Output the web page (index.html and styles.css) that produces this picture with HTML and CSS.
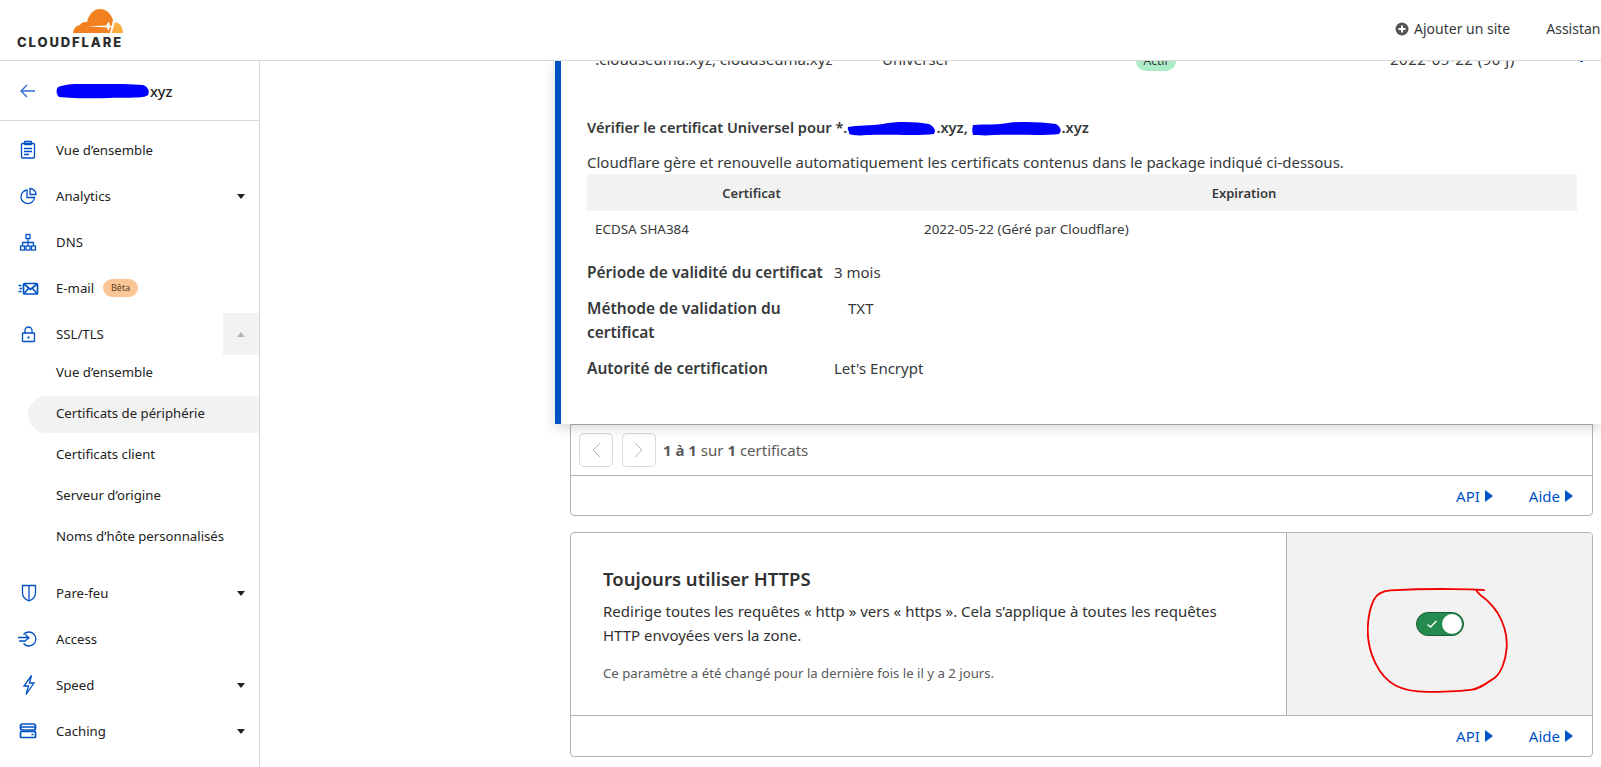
FILE: index.html
```html
<!DOCTYPE html>
<html lang="fr">
<head>
<meta charset="utf-8">
<title>Cloudflare - Certificats de périphérie</title>
<link rel="stylesheet" href="styles.css">
</head>
<body>
<header class="topbar">
  <div class="logo">
    <svg class="logo-cloud" width="50" height="24" viewBox="0 0 50 24">
      <path class="cloud-main" d="M0 24C.4 19.500 3.500 16.500 7 16C8.500 13.500 11 12.500 14 13.300C15.500 5.500 20.500 0 27 0C33 0 38 4.500 40 11L37 24Z"/>
      <path class="cloud-spark" d="M15 17.200L33 16.500L35.800 12.500L37 16.600L41 17.500L37 18.300L35.200 22L34 18.400Z"/>
      <path class="cloud-light" d="M38.500 24L40.500 18.500C41 16.500 41.300 15 41.500 13.500C46.500 13 50 18 50 24Z"/>
    </svg>
    <span class="logo-text">CLOUDFLARE</span>
  </div>
  <nav class="topnav">
    <a class="topnav-link">
      <svg width="14" height="14" viewBox="0 0 14 14"><circle cx="7" cy="7" r="6.500" class="plus-bg"/><path d="M7 3.500v7M3.500 7h7" class="plus-mark"/></svg>
      Ajouter un site
    </a>
    <a class="topnav-link topnav-cut">Assistance</a>
  </nav>
</header>

<div class="layout">
  <aside class="sidebar">
    <div class="domain">
      <svg class="back" width="18" height="14" viewBox="0 0 18 14"><path d="M16 7H2M8 1L2 7l6 6"/></svg>
      <span class="domain-name">
        <svg class="scribble" width="94" height="17" viewBox="0 0 95 17"><path d="M2 5C12 1 24 2 40 2C58 2 78 2 88 3C93 5 95 9 93 13C88 17 72 15 54 16C36 17 14 16 3 15C0 12 0 8 2 5Z"/></svg><span>xyz</span>
      </span>
    </div>
    <ul class="nav">
      <li class="nav-item">
        <svg class="ico" viewBox="0 0 24 24"><rect x="5.500" y="5.500" width="13" height="14.500" rx="1"/><rect x="8.500" y="3.500" width="7" height="3" rx=".5"/><path d="M8 10.500h8M8 13.500h8M8 16.500h5"/></svg>
        <span>Vue d’ensemble</span>
      </li>
      <li class="nav-item">
        <svg class="ico" viewBox="0 0 24 24"><path d="M11 6A6.800 6.800 0 1 0 18.500 13.500H11Z"/><path d="M14 4.500A6 6 0 0 1 20 10.500H14Z"/></svg>
        <span>Analytics</span><i class="caret"></i>
      </li>
      <li class="nav-item">
        <svg class="ico" viewBox="0 0 24 24"><rect x="10" y="4.500" width="4" height="4"/><rect x="4.500" y="16" width="4" height="4"/><rect x="10" y="16" width="4" height="4"/><rect x="15.500" y="16" width="4" height="4"/><path d="M12 8.500V16M6.500 16v-3.500h11V16"/></svg>
        <span>DNS</span>
      </li>
      <li class="nav-item">
        <svg class="ico ico-thick" viewBox="0 0 24 24"><rect x="7.500" y="7.500" width="14" height="10.500" rx="1"/><path d="M8 8l6.500 5.500L21 8M8 17.500l4.500-5M21 17.500l-4.500-5M2.500 9.500h3M3.500 12.500h2.500M2.500 15.500h3"/></svg>
        <span>E-mail</span><span class="beta">Bêta</span>
      </li>
      <li class="nav-item nav-open">
        <svg class="ico" viewBox="0 0 24 24"><rect x="6.500" y="11" width="12" height="8.500" rx=".5"/><path d="M9 11V8.500a3.500 3.500 0 0 1 7 0V11"/><path d="M12.500 14.500v2" class="ico-key"/></svg>
        <span>SSL/TLS</span><span class="caret-box"><i class="caret-up"></i></span>
      </li>
      <li>
        <ul class="subnav">
          <li class="sub-item">Vue d’ensemble</li>
          <li class="sub-item sub-active">Certificats de périphérie</li>
          <li class="sub-item">Certificats client</li>
          <li class="sub-item">Serveur d’origine</li>
          <li class="sub-item">Noms d’hôte personnalisés</li>
        </ul>
      </li>
      <li class="nav-item">
        <svg class="ico" viewBox="0 0 24 24"><path d="M6.500 4.500h13v7.500c0 4-3 6.500-6.500 8c-3.500-1.500-6.500-4-6.500-8Z"/><path d="M13 4.500v15"/></svg>
        <span>Pare-feu</span><i class="caret"></i>
      </li>
      <li class="nav-item">
        <svg class="ico" viewBox="0 0 24 24"><path d="M7.500 7.500A7 7 0 1 1 7.500 16.500"/><path d="M2 10.500h11M9.500 7.500l3.500 3.500-3.500 2.500M3 14h7"/></svg>
        <span>Access</span>
      </li>
      <li class="nav-item">
        <svg class="ico" viewBox="0 0 24 24"><path d="M15.500 2.500L8 13h4.500L10 21.500L18 10h-4.500Z"/></svg>
        <span>Speed</span><i class="caret"></i>
      </li>
      <li class="nav-item">
        <svg class="ico ico-thick" viewBox="0 0 24 24"><rect x="4.500" y="5" width="15" height="6" rx="2"/><rect x="4.500" y="12.500" width="15" height="6" rx="1"/><path d="M5 8h14M15.500 15.500h2"/></svg>
        <span>Caching</span><i class="caret"></i>
      </li>
    </ul>
  </aside>

  <main class="main">
    <section class="detail">
      <div class="cert-row">
        <span>*.cloudseuma.xyz, cloudseuma.xyz</span>
        <span>Universel</span>
        <span class="pill-cell"><span class="pill">Actif</span></span>
        <span class="cert-date">2022-05-22 (90 j)</span>
        <i class="row-chevron"></i>
      </div>
      <h3 class="detail-title">Vérifier le certificat Universel pour *.<svg class="scribble mid" width="89" height="15" viewBox="0 0 89 15"><path d="M1 6C10 4 24 5 36 3C50 0 70 1 82 3C88 6 89 10 87 13C72 15 40 13 20 14C12 15 5 14 2 13C3 11 0 9 1 6Z"/></svg>.xyz, <svg class="scribble mid" width="90" height="15" viewBox="0 0 90 15"><path d="M1 4C14 3 26 4 36 2C50 0 70 1 84 3C89 6 90 10 87 13C70 15 42 13 22 14C12 15 5 14 1 14C0 11 0 8 1 4Z"/></svg>.xyz</h3>
      <p class="detail-text">Cloudflare gère et renouvelle automatiquement les certificats contenus dans le package indiqué ci-dessous.</p>
      <table class="cert-table">
        <thead><tr><th>Certificat</th><th>Expiration</th></tr></thead>
        <tbody><tr><td>ECDSA SHA384</td><td>2022-05-22 (Géré par Cloudflare)</td></tr></tbody>
      </table>
      <dl class="kv-list">
        <div class="kv"><dt>Période de validité du certificat</dt><dd>3 mois</dd></div>
        <div class="kv kv-wide"><dt>Méthode de validation du certificat</dt><dd>TXT</dd></div>
        <div class="kv"><dt>Autorité de certification</dt><dd>Let's Encrypt</dd></div>
      </dl>
    </section>

    <section class="card card-open">
      <div class="pager">
        <button class="pager-btn"><svg width="12" height="18" viewBox="0 0 12 18"><path d="M10 2L3 9l7 7"/></svg></button>
        <button class="pager-btn"><svg width="12" height="18" viewBox="0 0 12 18"><path d="M2 2l7 7-7 7"/></svg></button>
        <span class="pager-text"><b>1 à 1</b> sur <b>1</b> certificats</span>
      </div>
      <div class="card-foot">
        <a class="foot-link">API<i class="tri"></i></a>
        <a class="foot-link">Aide<i class="tri"></i></a>
      </div>
    </section>

    <section class="card card-https">
      <div class="https-body">
        <div class="https-text">
          <h2>Toujours utiliser HTTPS</h2>
          <p class="https-desc">Redirige toutes les requêtes « http » vers « https ». Cela s’applique à toutes les requêtes HTTP envoyées vers la zone.</p>
          <p class="https-note">Ce paramètre a été changé pour la dernière fois le il y a 2 jours.</p>
        </div>
        <div class="https-panel">
          <span class="toggle"><svg width="12" height="10" viewBox="0 0 12 10"><path d="M1.500 5.500L4.500 8L10.500 2"/></svg><i class="knob"></i></span>
          <svg class="red-circle" width="144" height="109" viewBox="260 200 430 325"><path d="M610 212C590 209 560 209 520 209C460 208 400 209 330 213C305 216 290 222 280 242C270 262 263 295 262 330C262 365 270 400 285 430C297 455 312 478 345 497C370 510 400 516 440 516C480 516 530 514 570 510C595 507 615 492 640 475C660 460 674 425 677 385C680 345 668 310 650 280C635 258 618 240 600 228C595 224 590 220 586 212"/></svg>
        </div>
      </div>
      <div class="card-foot">
        <a class="foot-link">API<i class="tri"></i></a>
        <a class="foot-link">Aide<i class="tri"></i></a>
      </div>
    </section>
  </main>
</div>
</body>
</html>
```
FILE: styles.css
```css
* { box-sizing: border-box; }
html, body { margin: 0; height: 100%; overflow: hidden; }
body {
  font-family: "Noto Sans", "Open Sans", sans-serif;
  font-size: 14px;
  line-height: 20px;
  color: #313131;
  background: #fff;
  width: 1601px;
  height: 767px;
}
ul { list-style: none; margin: 0; padding: 0; }
h2, h3, p, dl, dd { margin: 0; }
a { color: inherit; text-decoration: none; }

/* top bar */
.topbar {
  height: 61px;
  border-bottom: 1px solid #d9d9d9;
  display: flex;
  justify-content: space-between;
  overflow: hidden;
  position: relative;
  z-index: 3;
  background: #fff;
}
.logo {
  margin-left: 17px;
  padding-top: 9px;
  width: 106px;
  display: flex;
  flex-direction: column;
  align-items: flex-end;
}
.logo-cloud { display: block; }
.cloud-main { fill: #f38020; }
.cloud-light { fill: #faae40; }
.cloud-spark { fill: #fff; }
.logo-text {
  font-family: "Inter", "Liberation Sans", sans-serif;
  font-weight: 800;
  font-size: 13px;
  line-height: 14px;
  letter-spacing: 1.900px;
  color: #2b2b2b;
  margin-top: 2px;
  white-space: nowrap;
  width: 106px;
}
.topnav {
  display: flex;
  flex: none;
  gap: 36px;
  width: 206px;
  padding-top: 19px;
  white-space: nowrap;
}
.topnav-link { display: flex; align-items: center; gap: 5px; height: 20px; color: #36393a; }
.plus-bg { fill: #555; }
.plus-mark { stroke: #fff; stroke-width: 2; fill: none; }

/* layout */
.layout { display: flex; height: 706px; }

/* sidebar */
.sidebar { width: 260px; flex: none; border-right: 1px solid #d9d9d9; font-size: 13.200px; }
.domain {
  height: 60px;
  border-bottom: 1px solid #d9d9d9;
  display: flex;
  align-items: center;
  padding-left: 19px;
}
.back { fill: none; stroke: #2c6ecb; stroke-width: 1.400; }
.domain-name {
  margin-left: 19px;
  display: flex;
  align-items: center;
  font-size: 14.500px;
  font-weight: 500;
  color: #222;
}
.scribble { fill: #0000ff; display: block; flex: none; }
.scribble.mid { display: inline-block; vertical-align: -3px; }
.nav { padding-top: 6px; }
.nav-item {
  height: 46px;
  display: flex;
  align-items: center;
  padding-left: 16px;
  position: relative;
  color: #222;
}
.ico {
  width: 24px;
  height: 24px;
  flex: none;
  margin-right: 16px;
  fill: none;
  stroke: #0051c3;
  stroke-width: 1.300;
}
.ico-thick { stroke-width: 1.700; }
.ico-key { stroke-width: 2; }
.caret {
  position: absolute;
  right: 14px;
  top: 21px;
  border-left: 4.500px solid transparent;
  border-right: 4.500px solid transparent;
  border-top: 5px solid #222;
}
.beta {
  margin-left: 9px;
  width: 35px;
  height: 18px;
  border-radius: 9px;
  background: #fbc697;
  font-size: 9px;
  line-height: 18px;
  text-align: center;
  color: #5e3a1e;
}
.nav-open { height: 42px; margin-top: 2px; }
.caret-box {
  position: absolute;
  right: 0;
  top: 0;
  width: 36px;
  height: 42px;
  background: #f2f2f2;
  display: flex;
  align-items: center;
  justify-content: center;
}
.caret-up {
  border-left: 4.500px solid transparent;
  border-right: 4.500px solid transparent;
  border-bottom: 5px solid #b5b5b5;
}
.subnav {
  display: flex;
  flex-direction: column;
  gap: 4px;
  padding-left: 28px;
  padding-bottom: 14px;
}
.sub-item {
  height: 37px;
  line-height: 35px;
  padding-left: 28px;
  color: #222;
  border-radius: 18.500px 0 0 18.500px;
}
.sub-active { background: #f2f2f2; }

/* main */
.main { flex: 1; min-width: 0; overflow: hidden; }
.detail {
  position: relative;
  z-index: 2;
  margin-left: 295px;
  width: 1046px;
  height: 363px;
  overflow: hidden;
  border-left: 6px solid #0051c3;
  padding: 0 24px 0 26px;
  background: #fff;
  box-shadow: 0 4px 12px rgba(0, 0, 0, 0.16);
  clip-path: inset(0 0 -20px -20px);
}
.cert-row {
  display: grid;
  grid-template-columns: 295px 254px 254px 190px 1fr;
  height: 20px;
  margin-top: -12px;
  white-space: nowrap;
  color: #36393a;
  font-size: 15px;
}
.cert-date { letter-spacing: .5px; }
.pill {
  display: inline-block;
  width: 40px;
  height: 20px;
  border-radius: 10px;
  background: #abebc6;
  text-align: center;
  font-size: 12px;
}
.row-chevron {
  display: block;
  width: 3px;
  height: 2px;
  background: #0051c3;
  margin-top: 11px;
}
.detail-title {
  margin-top: 48px;
  font-size: 14.600px;
  line-height: 20px;
  font-weight: 600;
  color: #36393a;
  white-space: nowrap;
}
.detail-text { margin-top: 15px; color: #36393a; white-space: nowrap; font-size: 15px; }
.cert-table {
  margin-top: 2px;
  width: 990px;
  border-collapse: collapse;
  table-layout: fixed;
  font-size: 13.400px;
}
.cert-table th {
  background: #f2f2f2;
  height: 37px;
  padding: 0;
  font-size: 13px;
  font-weight: 600;
  text-align: center;
  color: #36393a;
}
.cert-table th:first-child, .cert-table td:first-child { width: 329px; }
.cert-table th + th { padding-right: 5px; }
.cert-table td { height: 39px; padding: 0 8px 3px; color: #36393a; }
.kv-list { margin-top: 10px; display: flex; flex-direction: column; gap: 12px; }
.kv { display: flex; line-height: 24px; color: #36393a; font-size: 15px; }
.kv dt { width: 247px; flex: none; font-weight: 600; font-size: 15.500px; }
.kv-wide dt { width: 261px; padding-right: 60px; }

/* cards */
.card {
  margin-left: 310px;
  width: 1023px;
  border: 1px solid #b3b3b3;
  border-radius: 4px;
  background: #fff;
}
.card-open { border-radius: 0 0 4px 4px; height: 92px; }
.pager {
  height: 51px;
  border-bottom: 1px solid #b3b3b3;
  display: flex;
  align-items: center;
  gap: 9px;
  padding-left: 8px;
}
.pager-btn {
  width: 34px;
  height: 34px;
  padding: 0;
  background: #fff;
  border: 1px solid #d9d9d9;
  border-radius: 5px;
  display: flex;
  align-items: center;
  justify-content: center;
}
.pager-btn svg { fill: none; stroke: #b8b8b8; stroke-width: 1; }
.pager-text { margin-left: -2px; color: #595959; font-size: 15px; }
.pager-text b { font-weight: 700; }
.card-foot {
  height: 40px;
  display: flex;
  align-items: center;
  justify-content: flex-end;
  gap: 36px;
  padding-right: 19px;
}
.card-open .card-foot { height: 39px; }
.foot-link { display: flex; align-items: center; gap: 5px; color: #0051c3; font-size: 15px; }
.tri {
  border-top: 6.500px solid transparent;
  border-bottom: 6.500px solid transparent;
  border-left: 8px solid #0051c3;
}
.card-https { margin-top: 16px; height: 225px; }
.https-body { display: flex; height: 183px; border-bottom: 1px solid #b3b3b3; }
.https-text { flex: 1; padding: 34px 0 0 32px; }
.https-text h2 { font-size: 18.500px; line-height: 24px; font-weight: 600; color: #313131; }
.https-desc { margin-top: 8px; line-height: 24px; width: 640px; color: #313131; font-size: 15px; }
.https-note { margin-top: 16px; font-size: 13.200px; color: #595959; }
.https-panel {
  width: 306px;
  flex: none;
  background: #f2f2f2;
  border-left: 1px solid #b3b3b3;
  border-top-right-radius: 3px;
  display: flex;
  align-items: center;
  justify-content: center;
  position: relative;
}
.toggle {
  width: 48px;
  height: 24px;
  border-radius: 12px;
  background: #258a4d;
  border: 1px solid #1a5c36;
  display: flex;
  align-items: center;
  justify-content: space-between;
  padding: 0 1px 0 9px;
}
.toggle svg { fill: none; stroke: #fff; stroke-width: 1.400; }
.knob { width: 20px; height: 20px; border-radius: 50%; background: #fff; }
.red-circle {
  position: absolute;
  left: 80px;
  top: 53px;
  fill: none;
  stroke: #f00000;
  stroke-width: 5.500;
  stroke-linecap: round;
  stroke-linejoin: round;
}
```
